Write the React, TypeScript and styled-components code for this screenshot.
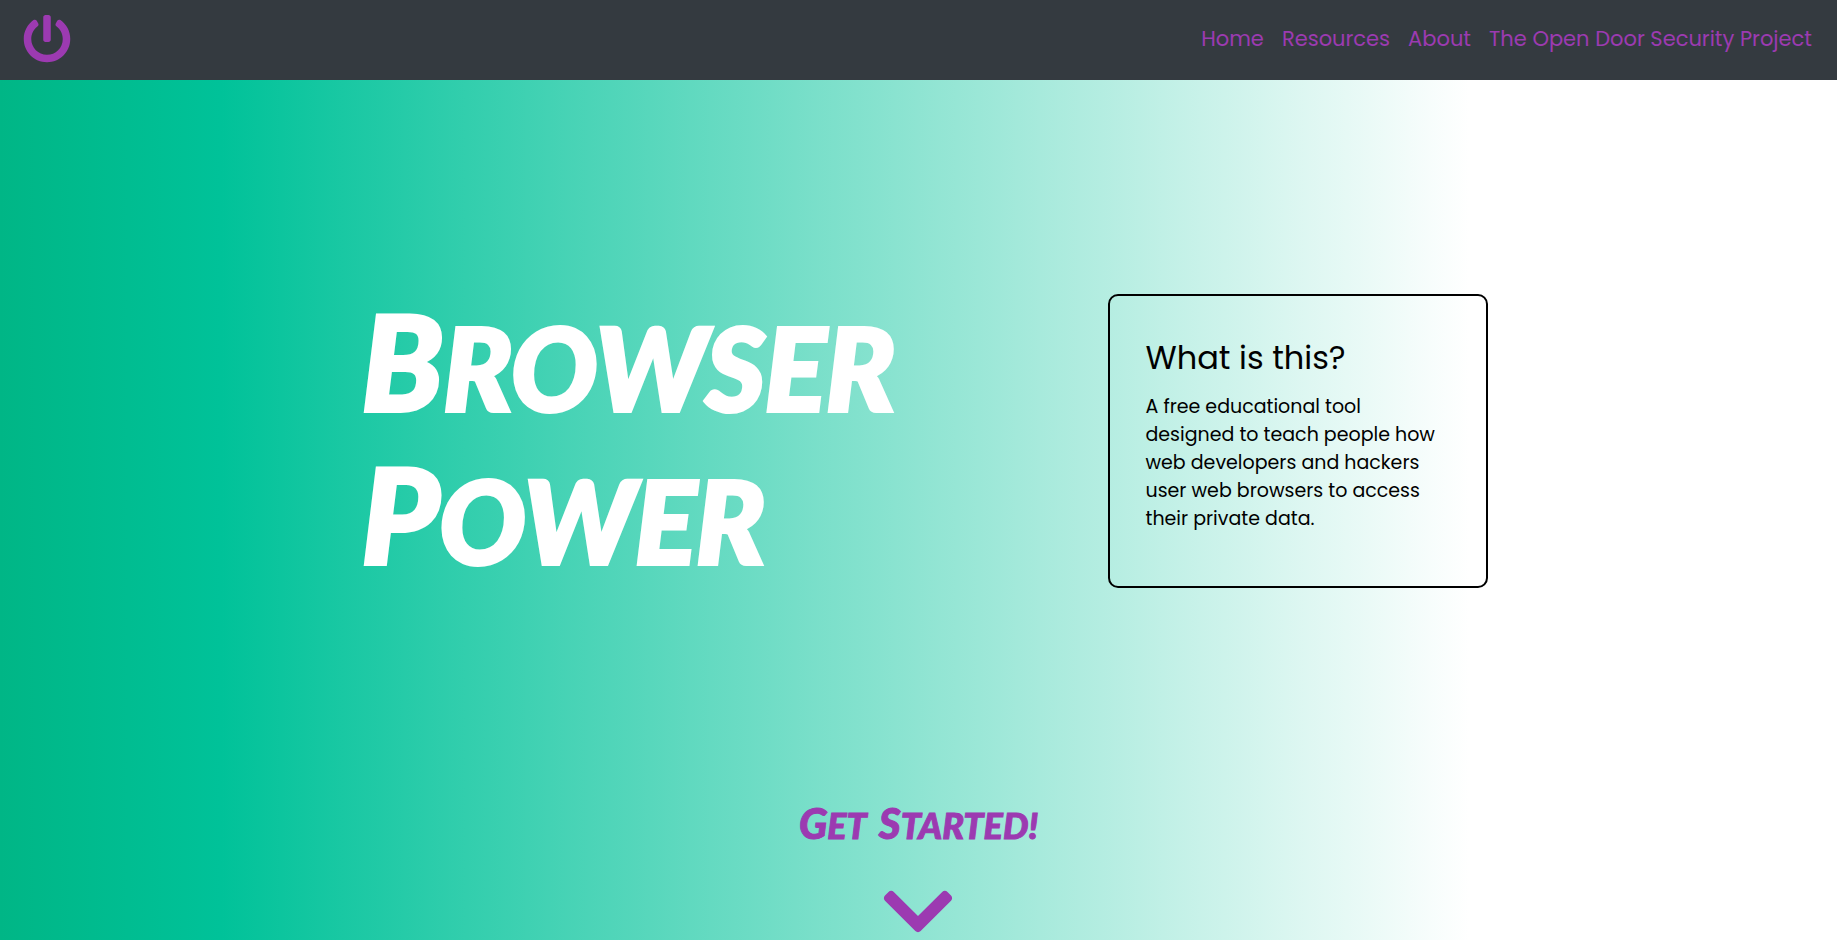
import React from "react";
import styled, { createGlobalStyle } from "styled-components";
import { FaChevronDown, FaPowerOff } from "react-icons/fa";

const purple = "#9c3ab1";
const body = `Poppins, Inter, "Open Sans", sans-serif`;
const marker = `"Permanent Marker", Lato, "Liberation Sans", sans-serif`;

const GlobalStyle = createGlobalStyle`
  *, *::before, *::after { box-sizing: border-box; }
  body { margin: 0; font-family: ${body}; color: #000; }
  h1, h2, p { margin: 0; }
`;

const Page = styled.div`
  min-height: 100vh;
  display: flex;
  flex-direction: column;
`;

const NavBar = styled.header`
  display: flex;
  align-items: center;
  justify-content: space-between;
  height: 80px;
  padding: 0 25px 2px 23px;
  background: #343a40;
`;

const Brand = styled.a`
  display: flex;
  color: ${purple};
  font-size: 48px;
`;

const NavLinks = styled.nav`
  display: flex;
  gap: 18px;
`;

const NavLink = styled.a`
  color: ${purple};
  font-size: 21px;
  line-height: 32px;
  text-decoration: none;
`;

const Hero = styled.main`
  flex: 1;
  display: flex;
  flex-direction: column;
  background: linear-gradient(to right, #00b686 0%, #00c299 12%, #fff 80%);
`;

const Intro = styled.section`
  flex: 1;
  display: flex;
  align-items: center;
  justify-content: space-between;
  width: 100%;
  max-width: 1138px;
  margin: 0 auto;
`;

const MarkerWord = styled.span<{ $stacked?: boolean; $initial: number }>`
  display: ${(p) => (p.$stacked ? "block" : "inline-block")};
  text-transform: uppercase;
  &::first-letter {
    font-size: ${(p) => p.$initial}px;
    line-height: 1;
  }
`;

const Title = styled.h1`
  padding: 4px 0 0 12px;
  color: #fff;
  font: italic 900 114px/153px ${marker};
  -webkit-text-stroke: 4px #fff;
`;

const Card = styled.section`
  width: 380px;
  min-height: 294px;
  padding: 42px 36px;
  border: 2px solid #000;
  border-radius: 10px;
`;

const CardTitle = styled.h2`
  margin-bottom: 15px;
  font-size: 32px;
  font-weight: 400;
  line-height: 40px;
`;

const CardText = styled.p`
  font-size: 19px;
  line-height: 28px;
`;

const Start = styled.a`
  align-self: center;
  display: flex;
  flex-direction: column;
  align-items: center;
  gap: 40px;
  color: ${purple};
  text-decoration: none;
`;

const StartLabel = styled.span`
  display: flex;
  gap: 12px;
  font: italic 900 36px/48px ${marker};
  -webkit-text-stroke: 1px ${purple};
`;

const Chevron = styled(FaChevronDown)`
  width: 70px;
  height: 50px;
  margin-bottom: 1px;
`;

const links = ["Home", "Resources", "About", "The Open Door Security Project"];

export default function App() {
  return (
    <Page>
      <GlobalStyle />
      <NavBar>
        <Brand href="#" aria-label="Browser Power">
          <FaPowerOff />
        </Brand>
        <NavLinks>
          {links.map((label) => (
            <NavLink href="#" key={label}>{label}</NavLink>
          ))}
        </NavLinks>
      </NavBar>
      <Hero>
        <Intro>
          <Title>
            <MarkerWord $stacked $initial={132}>Browser</MarkerWord>
            <MarkerWord $stacked $initial={132}>Power</MarkerWord>
          </Title>
          <Card>
            <CardTitle>What is this?</CardTitle>
            <CardText>
              A free educational tool designed to teach people how web
              developers and hackers user web browsers to access their private
              data.
            </CardText>
          </Card>
        </Intro>
        <Start href="#start">
          <StartLabel>
            <MarkerWord $initial={42}>Get</MarkerWord>
            <MarkerWord $initial={42}>Started!</MarkerWord>
          </StartLabel>
          <Chevron viewBox="0 112 448 320" />
        </Start>
      </Hero>
    </Page>
  );
}
